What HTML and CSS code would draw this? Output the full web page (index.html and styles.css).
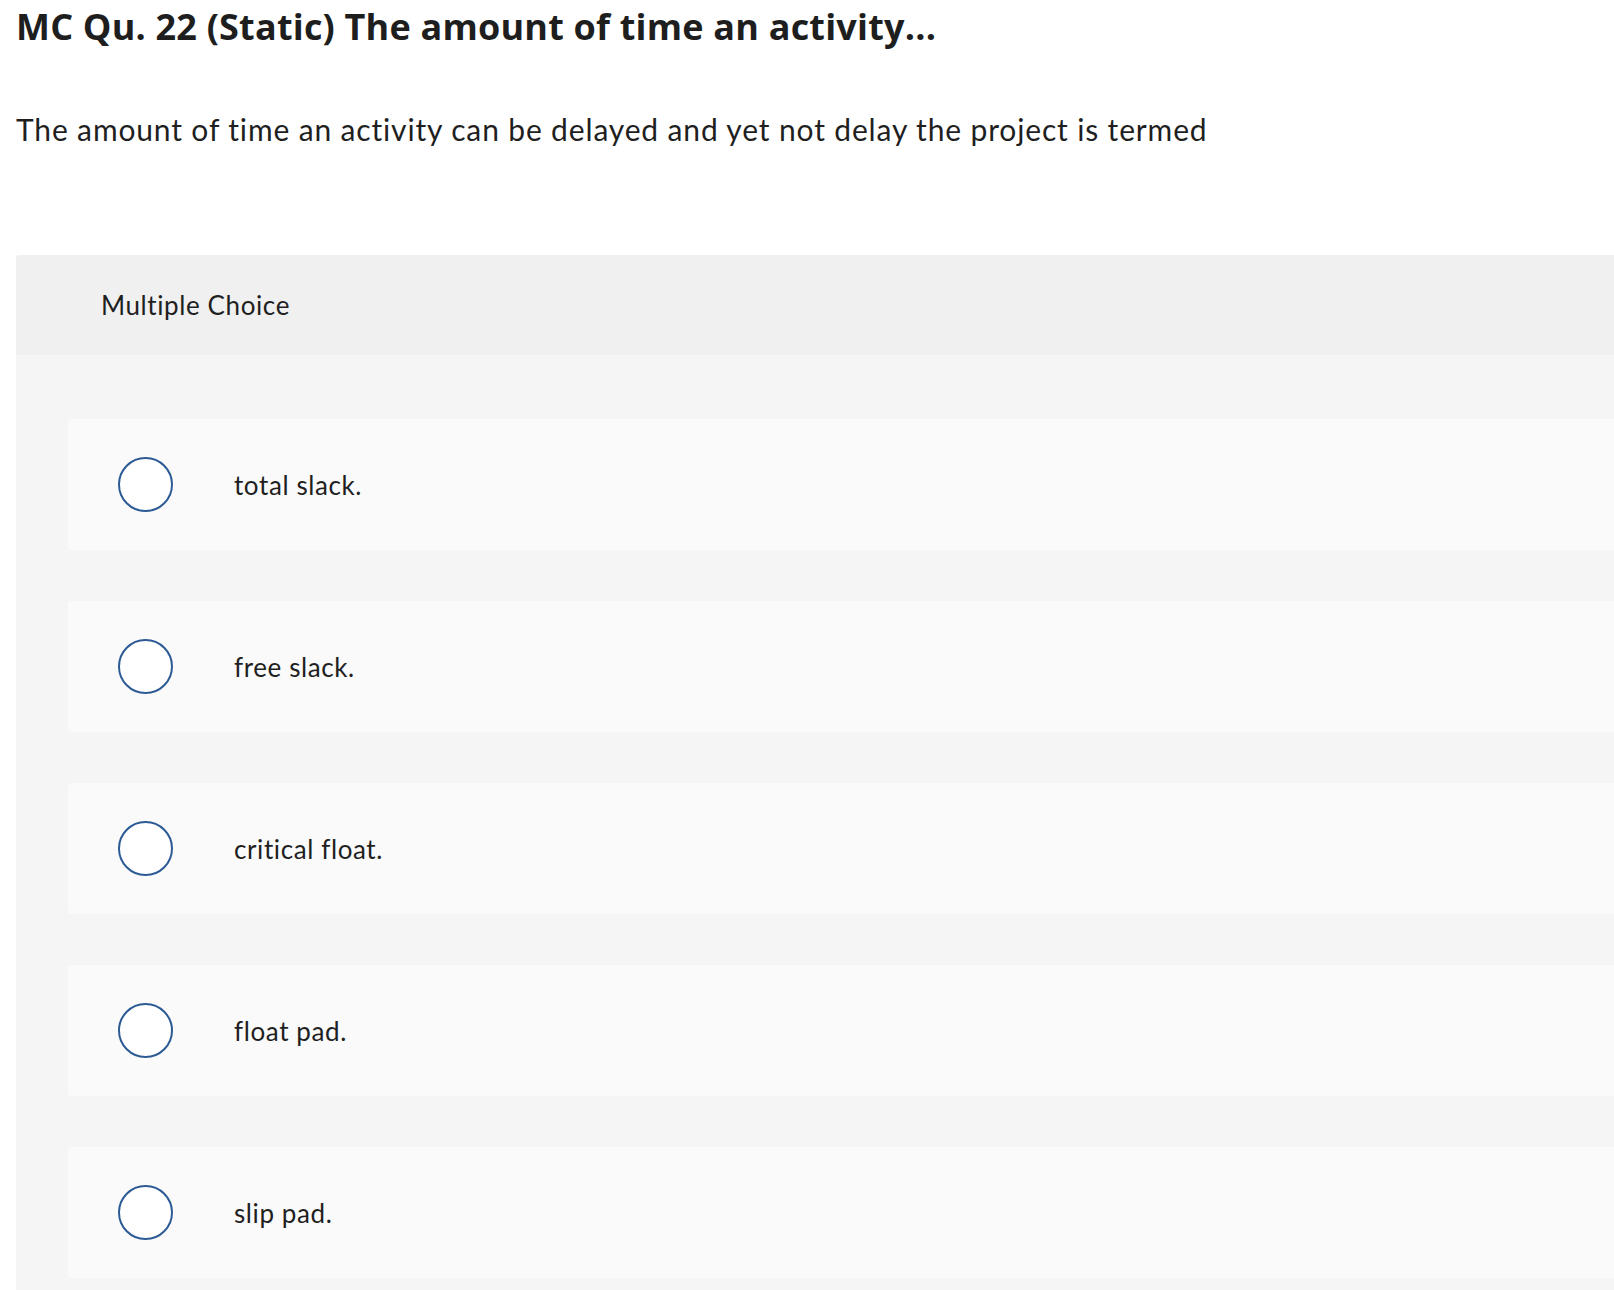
FILE: index.html
```html
<!DOCTYPE html>
<html lang="en">
<head>
<meta charset="utf-8">
<title>MC Qu. 22</title>
<link rel="stylesheet" href="styles.css">
</head>
<body>
<div class="page">
  <h1 class="title">MC Qu. 22 (Static) The amount of time an activity...</h1>
  <p class="prompt">The amount of time an activity can be delayed and yet not delay the project is termed</p>
  <section class="panel">
    <div class="panel-head">Multiple Choice</div>
    <div class="panel-body">
      <label class="option"><span class="radio"></span><span class="option-text">total slack.</span></label>
      <label class="option"><span class="radio"></span><span class="option-text">free slack.</span></label>
      <label class="option"><span class="radio"></span><span class="option-text">critical float.</span></label>
      <label class="option"><span class="radio"></span><span class="option-text">float pad.</span></label>
      <label class="option"><span class="radio"></span><span class="option-text">slip pad.</span></label>
    </div>
  </section>
</div>
</body>
</html>
```
FILE: styles.css
```css
html, body {
  margin: 0;
  padding: 0;
  background: #ffffff;
  overflow: hidden;
}
body {
  font-family: Lato, "Open Sans", "Liberation Sans", sans-serif;
  color: #222222;
}
.page {
  padding: 0 0 0 16px;
}
.title {
  margin: 0;
  padding-top: 5px;
  font-family: "Open Sans", Lato, "Liberation Sans", sans-serif;
  font-size: 36px;
  line-height: 44px;
  font-weight: 700;
  color: #1e1e1e;
  letter-spacing: 0.2px;
}
.prompt {
  margin: 62px 0 0 0;
  font-size: 30px;
  line-height: 36px;
  font-weight: 400;
  color: #1f1f1f;
  letter-spacing: 0.85px;
}
.panel {
  margin-top: 108px;
  width: 1700px;
  background: #f5f5f5;
  border-radius: 3px 0 0 0;
}
.panel-head {
  height: 100px;
  display: flex;
  align-items: center;
  padding-left: 85px;
  background: #f0f0f0;
  font-size: 26px;
  color: #1f1f1f;
  letter-spacing: 0.6px;
  border-radius: 3px 0 0 0;
}
.panel-body {
  padding: 64px 0 20px 52px;
  display: flex;
  flex-direction: column;
  gap: 51px;
}
.option {
  height: 131px;
  display: flex;
  align-items: center;
  padding-left: 50px;
  background: #fafafa;
  border-radius: 4px;
}
.radio {
  width: 51px;
  height: 51px;
  border: 2px solid #2c5a94;
  border-radius: 50%;
  background: #ffffff;
  flex: none;
}
.option-text {
  margin-left: 61px;
  font-size: 26px;
  color: #1f1f1f;
  letter-spacing: 0.6px;
}
```
